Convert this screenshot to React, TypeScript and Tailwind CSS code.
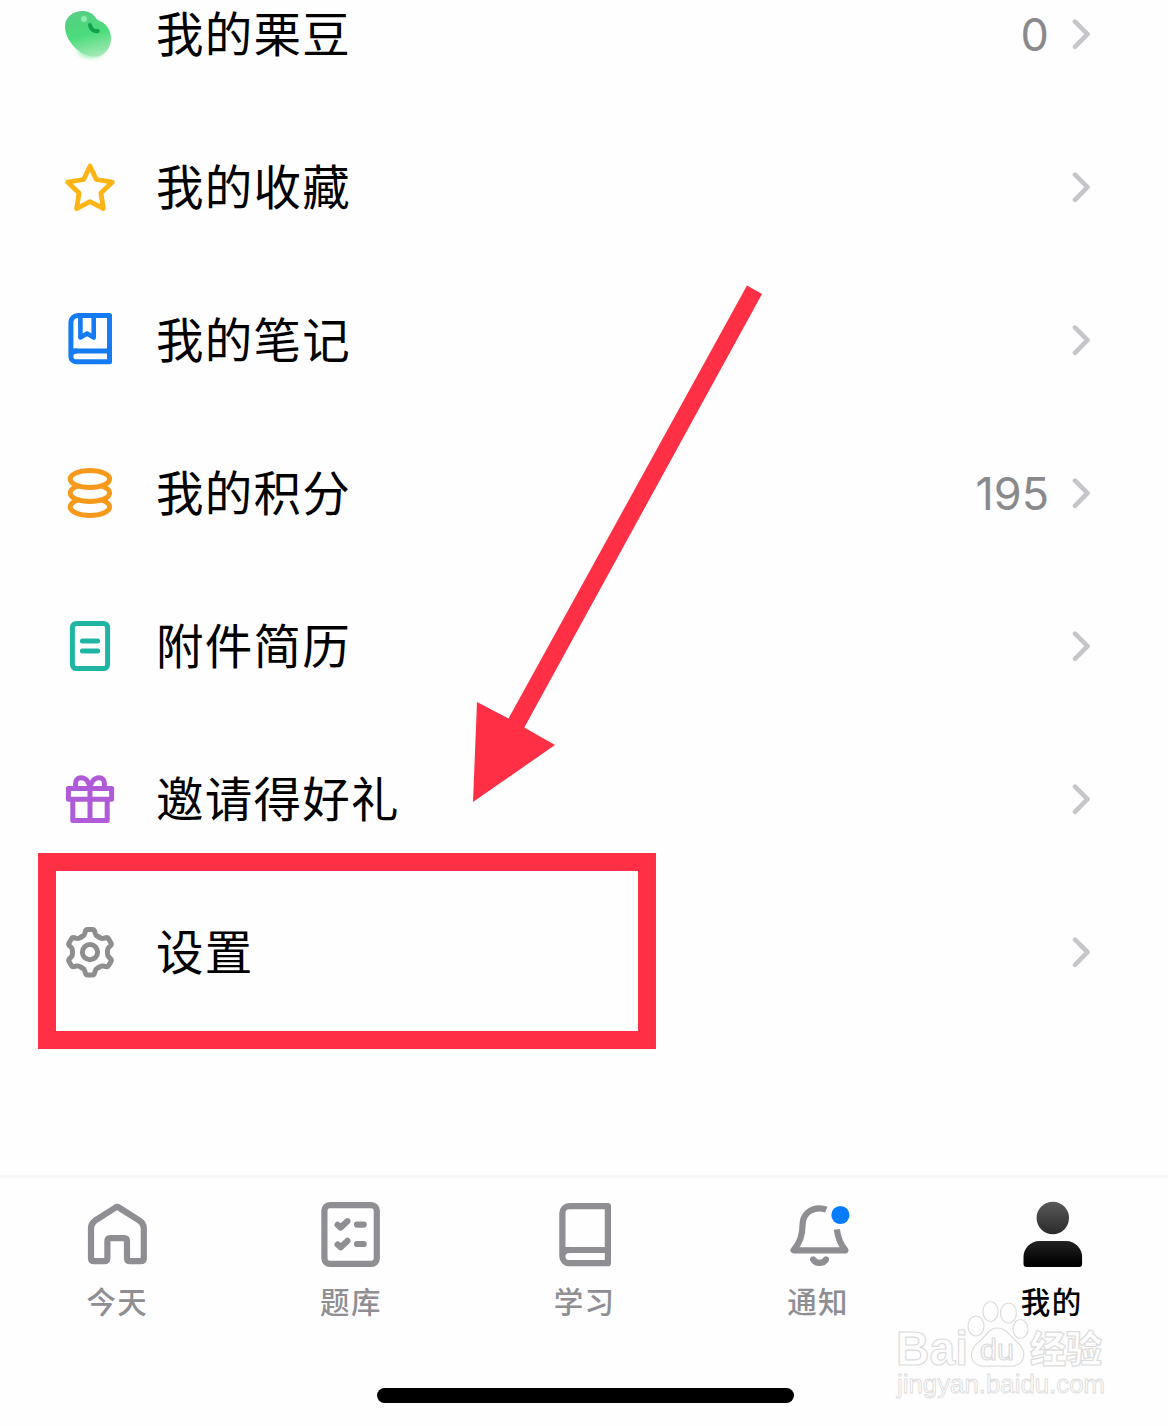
import React from 'react';

const BeanIcon = () => (
  <svg width="60" height="61" viewBox="0 0 60 61" fill="none">
    <defs>
      <linearGradient id="bean" x1="22" y1="8" x2="33" y2="53" gradientUnits="userSpaceOnUse">
        <stop offset="0" stopColor="#55cf82" />
        <stop offset="0.5" stopColor="#4bdc7b" />
        <stop offset="1" stopColor="#a5e9b4" />
      </linearGradient>
      <filter id="beanGlow" x="-30%" y="-30%" width="160%" height="160%">
        <feGaussianBlur stdDeviation="2.200" />
      </filter>
    </defs>
    <ellipse cx="31" cy="44" rx="14" ry="10" fill="#a0efb4" filter="url(#beanGlow)" />
    <path d="M22.500 7C28.500 7 32.500 9.500 35 13C36.800 15.600 38.500 16.300 41 17.600C47.500 21 51 27.500 51 34.500C51 45 44 52.500 34.500 52.500C20 52.500 5 37 5 22.500C5 13.500 12.500 7 22.500 7Z" fill="url(#bean)" />
    <circle cx="24" cy="15" r="3" fill="#8eeaae" />
    <path d="M30 21C30.500 25 34 27.800 37.800 27" stroke="#12a04b" strokeWidth="4" strokeLinecap="round" />
  </svg>
);

const StarIcon = () => (
  <svg width="60" height="61" viewBox="0 0 60 61" fill="none">
    <path
      d="M30 9L36.300 22.500L52.300 25.200L40.900 36L43.400 51.600L30 44.700L16.600 51.600L19.100 36L7.700 25.200L23.700 22.500Z"
      stroke="#fdb515"
      strokeWidth="4.800"
      strokeLinejoin="round"
    />
  </svg>
);

const NoteIcon = () => (
  <svg width="60" height="61" viewBox="0 0 60 61" fill="none" stroke="#147bf3" strokeWidth="5" strokeLinejoin="round" strokeLinecap="round">
    <path d="M10.900 46.400V12.500A7 7 0 0 1 17.900 5.500H49.500V51.800H16.300A5.400 5.400 0 0 1 16.300 41H49.500" />
    <path d="M10.900 41H17" strokeLinecap="butt" />
    <path d="M20.400 6V27.500L27 23.500L33.700 27.500V6" strokeWidth="4.600" />
  </svg>
);

const CoinsIcon = () => (
  <svg width="60" height="61" viewBox="0 0 60 61" fill="#fefefe" stroke="#f79a1c" strokeWidth="5">
    <ellipse cx="29.900" cy="43.900" rx="19.700" ry="8.600" />
    <ellipse cx="29.900" cy="29.900" rx="19.700" ry="8.600" />
    <ellipse cx="29.900" cy="16" rx="19.700" ry="8.400" />
  </svg>
);

const ResumeIcon = () => (
  <svg width="60" height="61" viewBox="0 0 60 61" fill="none" stroke="#20b5a3" strokeWidth="5" strokeLinecap="round">
    <rect x="12.400" y="7.400" width="35.200" height="45.200" rx="4" />
    <path d="M22.400 25H37.600M22.400 35H37.600" />
  </svg>
);

const GiftIcon = () => (
  <svg width="60" height="61" viewBox="0 0 60 61" fill="none" stroke="#af5bd8" strokeWidth="5" strokeLinejoin="round">
    <rect x="8.400" y="19.400" width="43.200" height="10.800" />
    <path d="M12.800 30V51.500H47.200V30M30 19V51" />
    <path d="M30 19C29 12.500 25.500 8.700 21 8.700C17.500 8.700 15.600 11.300 15.600 14.200V19M30 19C31 12.500 34.500 8.700 39 8.700C42.500 8.700 44.400 11.300 44.400 14.200V19" />
  </svg>
);

const TEETH = [0, 60, 120, 180, 240, 300];

const GearIcon = () => (
  <svg width="60" height="61" viewBox="0 0 60 61" fill="none" stroke="#8e8e8e" strokeWidth="5" strokeLinecap="round">
    <g transform="translate(30 30.200)">
      {TEETH.map((angle) => (
        <path
          key={angle}
          transform={`rotate(${angle})`}
          d="M-8.800-15.200L-7.100-16.200Q-5.800-17-5.300-18.500L-4.600-21Q-4.100-22.800-2.500-22.800H2.500Q4.100-22.800 4.600-21L5.300-18.500Q5.800-17 7.100-16.200L8.800-15.200"
        />
      ))}
      <circle r="7.600" />
    </g>
  </svg>
);

const Chevron = () => (
  <svg width="20" height="31" viewBox="0 0 20 31" fill="none">
    <path d="M4 2.600L16.500 15.200L4 27.800" stroke="#c6c6ca" strokeWidth="4.600" strokeLinecap="round" strokeLinejoin="round" />
  </svg>
);

const HomeIcon = () => (
  <svg width="70" height="70" viewBox="0 0 70 70" fill="none" stroke="#8e8e93" strokeWidth="6.200" strokeLinejoin="round">
    <path d="M33.600 7.500Q35.200 6.500 36.800 7.500L57.500 20.700Q61.800 23.500 61.800 28V58Q61.800 61.200 58.600 61.200H48.200Q45 61.200 45 58V41.200Q45 38.200 42 38.200H28.400Q25.400 38.200 25.400 41.200V58Q25.400 61.200 22.200 61.200H12.200Q9 61.200 9 58V28Q9 23.500 13 20.700Z" />
  </svg>
);

const QuizIcon = () => (
  <svg width="70" height="70" viewBox="0 0 70 70" fill="none" stroke="#8e8e93" strokeWidth="6.200" strokeLinejoin="round" strokeLinecap="round">
    <rect x="9.400" y="5.100" width="52.400" height="58.800" rx="5.500" />
    <path d="M22.600 24.800L25.700 27.600L32.400 21.200M22.600 44.500L25.700 47.300L32.400 40.900" />
    <path d="M42 24.600H48.700M42 44H48.700" />
  </svg>
);

const StudyIcon = () => (
  <svg width="70" height="70" viewBox="0 0 70 70" fill="none" stroke="#8e8e93" strokeWidth="6.200" strokeLinejoin="round" strokeLinecap="round">
    <path d="M13.400 56.600V13A6.900 6.900 0 0 1 20.300 6.100H58.900V63.200H20A6.600 6.600 0 0 1 20 50H58.900" />
    <path d="M13.400 50H21" strokeLinecap="butt" />
  </svg>
);

const BellIcon = () => (
  <svg width="70" height="70" viewBox="0 0 70 70" fill="none" stroke="#8e8e93" strokeWidth="6.200" strokeLinejoin="round">
    <path d="M43.300 9.600C41.300 8.800 39 8.300 36.700 8.300C27 8.300 19.600 14.800 19.600 24.500C19.600 36 17 43 10.500 50.300H62.400C57 43.500 54.800 37 53.800 29.300" />
    <path d="M30.200 59.500C33 64 40.200 64 43 59.500" strokeLinecap="round" />
    <circle cx="57.400" cy="15" r="9.100" fill="#087cff" stroke="none" />
  </svg>
);

const UserIcon = () => (
  <svg width="70" height="70" viewBox="0 0 70 70">
    <defs>
      <linearGradient id="user" x1="0" y1="2" x2="0" y2="65" gradientUnits="userSpaceOnUse">
        <stop offset="0" stopColor="#595959" />
        <stop offset="1" stopColor="#000" />
      </linearGradient>
    </defs>
    <circle cx="36.800" cy="18" r="16.200" fill="url(#user)" />
    <path d="M7.500 57A16 16 0 0 1 23.500 41H50.100A16 16 0 0 1 66.100 57V64Q66.100 67 63.100 67H10.500Q7.500 67 7.500 64Z" fill="url(#user)" />
  </svg>
);

const menu = [
  { label: '我的栗豆', icon: <BeanIcon />, value: '0' },
  { label: '我的收藏', icon: <StarIcon /> },
  { label: '我的笔记', icon: <NoteIcon /> },
  { label: '我的积分', icon: <CoinsIcon />, value: '195' },
  { label: '附件简历', icon: <ResumeIcon /> },
  { label: '邀请得好礼', icon: <GiftIcon /> },
  { label: '设置', icon: <GearIcon /> },
];

const tabs = [
  { label: '今天', icon: <HomeIcon /> },
  { label: '题库', icon: <QuizIcon /> },
  { label: '学习', icon: <StudyIcon /> },
  { label: '通知', icon: <BellIcon /> },
  { label: '我的', icon: <UserIcon />, active: true },
];

const Watermark = () => (
  <svg
    className="absolute left-[890px] top-[1296px]"
    width="224"
    height="110"
    viewBox="0 0 224 110"
    fill="#fefefe"
    stroke="#dcdcdc"
    strokeWidth="1.200"
    fontFamily="'Liberation Sans', 'Noto Sans CJK SC', sans-serif"
  >
    <ellipse cx="86" cy="30" rx="8" ry="10" />
    <ellipse cx="100.500" cy="15.500" rx="7.500" ry="10" />
    <ellipse cx="118.500" cy="17" rx="8" ry="10" />
    <ellipse cx="130.500" cy="33" rx="7.500" ry="9.500" />
    <path d="M107 32C116 32 119 39 126 45C133 51 136 58 132 65C128 72 118 70 107 70C96 70 88 72 83 65C79 58 83 50 90 45C96 40 99 32 107 32Z" />
    <text x="6" y="69" fontSize="48" fontWeight="700" textLength="72" lengthAdjust="spacingAndGlyphs">Bai</text>
    <text x="90" y="64" fontSize="29" textLength="34" lengthAdjust="spacingAndGlyphs">du</text>
    <text x="140" y="67" fontSize="37" fontWeight="900" textLength="72" lengthAdjust="spacingAndGlyphs" fontFamily="'Noto Sans CJK SC', sans-serif">经验</text>
    <text x="7" y="97" fontSize="25" strokeWidth="0.800" textLength="208" lengthAdjust="spacingAndGlyphs">jingyan.baidu.com</text>
  </svg>
);

const App: React.FC = () => {
  return (
    <div className="relative flex h-[1426px] w-[1168px] flex-col overflow-hidden bg-[#fefefe] font-['Noto_Sans_CJK_SC',sans-serif] text-black">
      {/* the first row is scrolled partly out of view */}
      <div className="-mt-[42px] h-[1217px] shrink-0">
        {menu.map((item) => (
          <div key={item.label} className="flex h-[153px] items-center pl-[60px] pr-[77px]">
            {item.icon}
            <span className="ml-9 pb-[5px] text-[47.500px] leading-[60px] tracking-[1.250px]">{item.label}</span>
            <span className="ml-auto mr-[22px] font-['Inter',sans-serif] text-[45px] leading-[60px] text-[#8a8a8c]">{item.value}</span>
            <Chevron />
          </div>
        ))}
      </div>

      <nav className="flex shrink-0 border-t-[3px] border-[#f7f7f7] pt-[22px]">
        {tabs.map((tab) => (
          <div key={tab.label} className={`flex flex-1 flex-col items-center ${tab.active ? 'text-black' : 'text-[#8e8e93]'}`}>
            {tab.icon}
            <span className="mt-2.5 mb-0.5 pl-px text-[29.500px] font-medium leading-10 tracking-[1.300px]">{tab.label}</span>
          </div>
        ))}
      </nav>

      <div className="ml-[377px] mt-[66px] h-[15px] w-[417px] shrink-0 rounded-full bg-black" />

      <Watermark />

      <div className="absolute left-[38px] top-[853px] h-[196px] w-[618px] border-[18px] border-[#ff2f45]" />
      <svg className="absolute left-[470px] top-[280px]" width="300" height="530" viewBox="470 280 300 530">
        <path d="M747 285.500L762 294L524.300 727.500L555 745L473 802L477 702L508.500 718.500Z" fill="#ff2f45" />
      </svg>
    </div>
  );
};

export default App;
